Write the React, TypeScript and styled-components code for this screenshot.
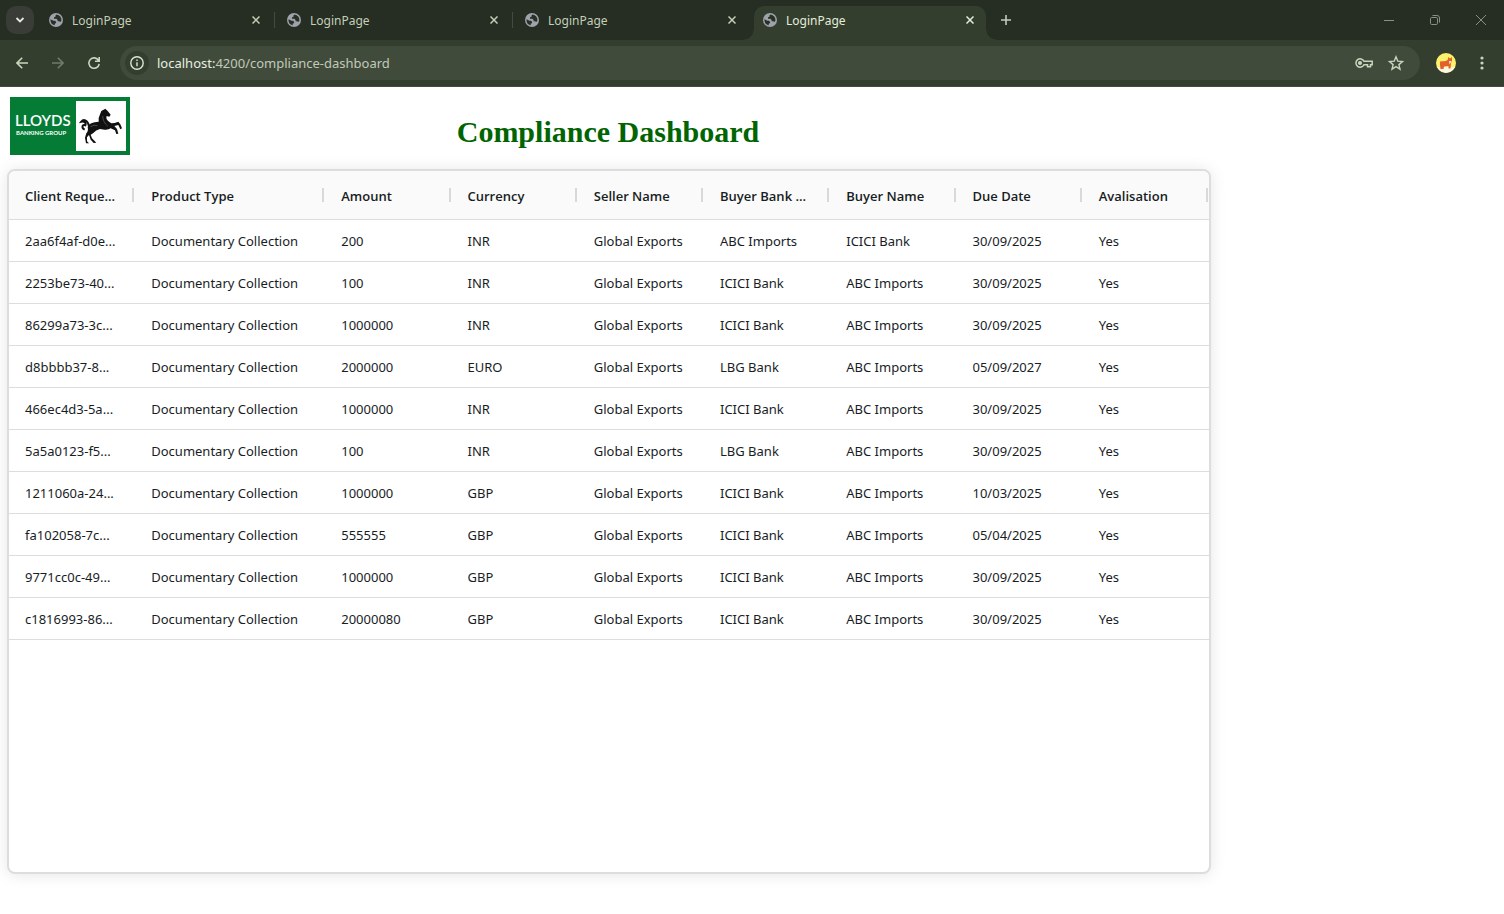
import React from "react";
import styled, { createGlobalStyle, css } from "styled-components";

const ui = css`
  font-family: "Noto Sans", "Open Sans", sans-serif;
`;

const GlobalStyle = createGlobalStyle`
  *, *::before, *::after { box-sizing: border-box; }
  html, body, #root { height: 100%; }
  body { margin: 0; background: #fff; }
  button { border: 0; padding: 0; margin: 0; background: none; font: inherit; color: inherit; }
`;

const Window = styled.div`
  min-height: 100%;
  display: flex;
  flex-direction: column;
`;

const TabStrip = styled.header`
  ${ui}
  display: flex;
  align-items: center;
  height: 40px;
  padding-left: 6px;
  background: #262d22;
  color: #c3cfb8;
  font-size: 12px;
`;

const TabSearch = styled.button`
  display: grid;
  place-items: center;
  width: 28px;
  height: 28px;
  margin-right: 2px;
  border-radius: 10px;
  background: #3a3c38;
  color: #e4eadf;
`;

const Tab = styled.div<{ $active?: boolean; $divider?: boolean }>`
  position: relative;
  display: flex;
  align-items: center;
  flex: 0 1 238px;
  height: 34px;
  margin-top: 6px;
  padding: 0 12px 6px 13px;
  ${(p) =>
    p.$divider &&
    css`
      &::after {
        content: "";
        position: absolute;
        right: -1px;
        top: 6px;
        width: 1px;
        height: 16px;
        background: #434b3e;
      }
    `}
  ${(p) =>
    p.$active &&
    css`
      flex-basis: 232px;
      margin-left: 4px;
      padding: 0 10px 6px 9px;
      border-radius: 10px 10px 0 0;
      background: #343e2e;
      color: #e3eddb;
      &::before,
      &::after {
        content: "";
        position: absolute;
        bottom: 0;
        width: 10px;
        height: 10px;
      }
      &::before {
        right: 100%;
        background: radial-gradient(circle at 0 0, transparent 9px, #343e2e 10px);
      }
      &::after {
        left: 100%;
        background: radial-gradient(circle at 100% 0, transparent 9px, #343e2e 10px);
      }
    `}
`;

const TabTitle = styled.span`
  flex: 1;
  margin-left: 9px;
  padding-top: 2px;
  line-height: 16px;
`;

const IconButton = styled.button<{ $size?: number; $dim?: boolean }>`
  display: grid;
  place-items: center;
  flex: none;
  width: ${(p) => p.$size ?? 28}px;
  height: ${(p) => p.$size ?? 28}px;
  opacity: ${(p) => (p.$dim ? 0.4 : 1)};
`;

const NewTab = styled(IconButton)`
  margin-left: 6px;
  color: #c4c8c1;
`;

const WindowControls = styled.div`
  display: flex;
  margin-left: auto;
  color: #8a8f86;
`;

const WindowButton = styled.button`
  display: grid;
  place-items: center;
  width: 46px;
  height: 40px;
`;

const Toolbar = styled.nav`
  ${ui}
  display: flex;
  align-items: center;
  height: 47px;
  padding: 0 8px;
  gap: 8px;
  background: #343e2e;
  border-bottom: 1px solid #434c3e;
  color: #c9d6be;
`;

const Omnibox = styled.div`
  display: flex;
  align-items: center;
  flex: 1;
  height: 34px;
  margin: 0 4px;
  padding: 0 8px 0 5px;
  border-radius: 17px;
  background: #404b3b;
`;

const SiteInfo = styled.button`
  display: grid;
  place-items: center;
  width: 24px;
  height: 24px;
  border-radius: 12px;
  background: #343e2e;
  color: #dde4d8;
`;

const Address = styled.div`
  flex: 1;
  margin-left: 8px;
  color: #c0c9ba;
  font-size: 13px;
  line-height: 20px;
  b {
    font-weight: 400;
    color: #e8efe2;
  }
`;

const Page = styled.main`
  flex: 1;
  padding: 10px 7px 40px;
`;

const PageHead = styled.div`
  display: grid;
  grid-template-columns: 123px 1fr 123px;
  align-items: start;
  width: 100%;
  max-width: 1202px;
  height: 72px;
`;

const Logo = styled.svg`
  display: block;
  width: 120px;
  height: 58px;
  margin-left: 3px;
`;

const Title = styled.h1`
  margin: 17px 0 0;
  text-align: center;
  color: #006400;
  font: bold 30px/36px "Liberation Serif", "Times New Roman", serif;
`;

const Grid = styled.section`
  ${ui}
  width: 100%;
  max-width: 1204px;
  min-height: 705px;
  border: 2px solid #dddddd;
  border-radius: 8px;
  overflow: hidden;
  background: #fff;
  box-shadow: 0 1px 16px rgba(0, 0, 0, 0.1);
`;

const Table = styled.table`
  width: 100%;
  border-collapse: separate;
  border-spacing: 0;
  table-layout: fixed;
  color: #181d1f;
  font-size: 13px;
  line-height: 20px;
  text-align: left;
`;

const HeaderCell = styled.th<{ $wide?: boolean }>`
  position: relative;
  width: ${(p) => (p.$wide ? "190px" : "auto")};
  height: 49px;
  padding: 2px 16px 0;
  background: #fafafa;
  border-bottom: 1px solid #dddddd;
  font-family: "Open Sans", "Noto Sans", sans-serif;
  font-weight: 600;
  white-space: nowrap;
  &::after {
    content: "";
    position: absolute;
    right: 1px;
    top: 17px;
    width: 2px;
    height: 14px;
    background: #d9d9d9;
  }
`;

const Cell = styled.td`
  height: 42px;
  padding: 0 16px;
  border-bottom: 1px solid #dddddd;
  white-space: nowrap;
`;

const Globe = () => (
  <svg width="14" height="14" viewBox="0 0 14 14" aria-hidden="true">
    <circle cx="7" cy="7" r="7" fill="#9da2ab" />
    <path
      d="M7.600 1.500 6.500 2.600v1.200L5 4.300v1.400h2.400l1.200 1.200v1.300h1.600l1 .8 1.200-1.300A5.600 5.600 0 0 0 7.600 1.500ZM1.500 6.200l2.900 1.600h1.700l1 1.100v1.200l-1.400.6v1.600A5.700 5.700 0 0 1 1.500 6.200Z"
      fill="#293026"
    />
  </svg>
);

const Cross = () => (
  <svg width="8" height="8" viewBox="0 0 8 8" stroke="currentColor" strokeWidth="1.5" aria-hidden="true">
    <path d="M.5.5l7 7M7.500.5l-7 7" />
  </svg>
);

const LloydsLogo = () => (
  <Logo viewBox="0 0 120 58" role="img" aria-label="Lloyds Banking Group">
    <rect width="120" height="58" fill="#047c36" />
    <rect x="66" y="4" width="50" height="50" fill="#fff" />
    <text x="5" y="29" fill="#fff" fontFamily="Lato, sans-serif" fontWeight="600" fontSize="15">
      LLOYDS
    </text>
    <text x="6" y="38" fill="#fff" fontFamily="Lato, sans-serif" fontWeight="700" fontSize="6">
      BANKING GROUP
    </text>
    <g transform="translate(64 0) scale(.3333)">
      <path
        d="M94 35 101 42 110 53 106 59 98 57 97 63Q99 72 112 79L122 78 133 74 139 82 144 94 139 97 133 84 121 87 129 96 133 110 127 111 123 100 110 94Q103 99 92 98L78 96Q66 99 57 109L50 113 54 124 67 137 59 138 50 128 45 114 39 121 39 133 45 139 36 139 33 122 37 109Q44 102 41 90 44 80 62 76L74 74Q72 64 77 55L82 42Z"
        fill="#111"
      />
      <path
        d="M45 88C42 70 29 65 22 74C31 72 38 79 34 85C24 81 22 93 32 98"
        fill="none"
        stroke="#111"
        strokeWidth="6"
      />
      <path d="M86 57Q87 76 101 87M50 89Q61 82 70 86" fill="none" stroke="#666" strokeWidth="2" />
    </g>
  </Logo>
);

const columns = [
  "Client Reque...",
  "Product Type",
  "Amount",
  "Currency",
  "Seller Name",
  "Buyer Bank ...",
  "Buyer Name",
  "Due Date",
  "Avalisation",
];

const D = "Documentary Collection";
const G = "Global Exports";
const rows = [
  ["2aa6f4af-d0e...", D, "200", "INR", G, "ABC Imports", "ICICI Bank", "30/09/2025", "Yes"],
  ["2253be73-40...", D, "100", "INR", G, "ICICI Bank", "ABC Imports", "30/09/2025", "Yes"],
  ["86299a73-3c...", D, "1000000", "INR", G, "ICICI Bank", "ABC Imports", "30/09/2025", "Yes"],
  ["d8bbbb37-8...", D, "2000000", "EURO", G, "LBG Bank", "ABC Imports", "05/09/2027", "Yes"],
  ["466ec4d3-5a...", D, "1000000", "INR", G, "ICICI Bank", "ABC Imports", "30/09/2025", "Yes"],
  ["5a5a0123-f5...", D, "100", "INR", G, "LBG Bank", "ABC Imports", "30/09/2025", "Yes"],
  ["1211060a-24...", D, "1000000", "GBP", G, "ICICI Bank", "ABC Imports", "10/03/2025", "Yes"],
  ["fa102058-7c...", D, "555555", "GBP", G, "ICICI Bank", "ABC Imports", "05/04/2025", "Yes"],
  ["9771cc0c-49...", D, "1000000", "GBP", G, "ICICI Bank", "ABC Imports", "30/09/2025", "Yes"],
  ["c1816993-86...", D, "20000080", "GBP", G, "ICICI Bank", "ABC Imports", "30/09/2025", "Yes"],
];

export default function App() {
  return (
    <Window>
      <GlobalStyle />
      <TabStrip>
        <TabSearch aria-label="Search tabs">
          <svg width="10" height="6" viewBox="0 0 10 6" fill="none" stroke="currentColor" strokeWidth="1.800">
            <path d="M1.500 1 5 4.500 8.500 1" />
          </svg>
        </TabSearch>
        {[0, 1, 2, 3].map((i) => (
          <Tab key={i} $active={i === 3} $divider={i < 2}>
            <Globe />
            <TabTitle>LoginPage</TabTitle>
            <IconButton $size={12} aria-label="Close tab">
              <Cross />
            </IconButton>
          </Tab>
        ))}
        <NewTab aria-label="New tab">
          <svg width="10" height="10" viewBox="0 0 10 10" stroke="currentColor" strokeWidth="1.600">
            <path d="M5 0v10M0 5h10" />
          </svg>
        </NewTab>
        <WindowControls>
          <WindowButton aria-label="Minimize">
            <svg width="10" height="10" viewBox="0 0 10 10" stroke="currentColor">
              <path d="M0 5.500h10" />
            </svg>
          </WindowButton>
          <WindowButton aria-label="Restore">
            <svg width="10" height="10" viewBox="0 0 10 10" fill="none" stroke="currentColor">
              <rect x=".5" y="2.500" width="7" height="7" rx="1.200" />
              <path d="M2.500.5H7A2.500 2.500 0 0 1 9.500 3v4.500" />
            </svg>
          </WindowButton>
          <WindowButton aria-label="Close window">
            <svg width="10" height="10" viewBox="0 0 10 10" stroke="currentColor">
              <path d="M0 0l10 10M10 0 0 10" />
            </svg>
          </WindowButton>
        </WindowControls>
      </TabStrip>

      <Toolbar>
        <IconButton aria-label="Back">
          <svg width="12" height="12" viewBox="0 0 12 12" fill="none" stroke="currentColor" strokeWidth="1.600">
            <path d="M12 6H1M6.200.8 1 6l5.200 5.200" />
          </svg>
        </IconButton>
        <IconButton $dim aria-label="Forward">
          <svg width="12" height="12" viewBox="0 0 12 12" fill="none" stroke="currentColor" strokeWidth="1.600">
            <path d="M0 6h11M5.800.8 11 6l-5.200 5.200" />
          </svg>
        </IconButton>
        <IconButton aria-label="Reload">
          <svg width="12" height="12" viewBox="0 0 12 12" fill="none" stroke="currentColor" strokeWidth="1.600">
            <path d="M10.600 3.500A5.200 5.200 0 1 0 11.200 7M11.200 0v4.200H7" />
          </svg>
        </IconButton>
        <Omnibox>
          <SiteInfo aria-label="View site information">
            <svg width="14" height="14" viewBox="0 0 14 14" fill="none" stroke="currentColor" strokeWidth="1.400">
              <circle cx="7" cy="7" r="6.200" />
              <path d="M7 6.200v4M7 3.600v1.500" />
            </svg>
          </SiteInfo>
          <Address>
            <b>localhost:</b>4200/compliance-dashboard
          </Address>
          <IconButton $size={32} aria-label="Passwords">
            <svg width="18" height="10" viewBox="0 0 18 10" fill="none" stroke="currentColor" strokeWidth="1.500">
              <path d="M9 3.300A4.200 4.200 0 1 0 9 6.700h3.500v2h3v-2h1.700V3.300Z" />
              <circle cx="5" cy="5" r="1.300" fill="currentColor" />
            </svg>
          </IconButton>
          <IconButton $size={32} aria-label="Bookmark this tab">
            <svg width="16" height="16" viewBox="0 0 16 16" fill="none" stroke="currentColor" strokeWidth="1.400">
              <path d="M8 1.800l1.800 4.400 4.700.4-3.600 3 1.100 4.600L8 11.700l-4 2.500 1.100-4.600-3.600-3 4.700-.4Z" />
            </svg>
          </IconButton>
        </Omnibox>
        <IconButton aria-label="Profile">
          <svg width="20" height="20" viewBox="0 0 20 20">
            <circle cx="10" cy="10" r="10" fill="#fdf06a" />
            <path d="M1 14h18A10 10 0 0 1 1 14Z" fill="#fbf5e4" />
            <path d="M4 8.500 10 8 12 6.500 12 4l2 1.500L16 4v3.500l-1 2.500-.5 5.500h-2V13L8 13.500 7.500 16h-3L4 12Z" fill="#e3602b" />
            <path d="M13 8h2.500l-1 2-1 1.500Z" fill="#fbe6d0" />
          </svg>
        </IconButton>
        <IconButton aria-label="Menu">
          <svg width="4" height="14" viewBox="0 0 4 14" fill="currentColor">
            <circle cx="2" cy="2" r="1.600" />
            <circle cx="2" cy="7" r="1.600" />
            <circle cx="2" cy="12" r="1.600" />
          </svg>
        </IconButton>
      </Toolbar>

      <Page>
        <PageHead>
          <LloydsLogo />
          <Title>Compliance Dashboard</Title>
        </PageHead>
        <Grid>
          <Table>
            <thead>
              <tr>
                {columns.map((c, i) => (
                  <HeaderCell key={c} scope="col" $wide={i === 1}>
                    {c}
                  </HeaderCell>
                ))}
              </tr>
            </thead>
            <tbody>
              {rows.map((r) => (
                <tr key={r[0]}>
                  {r.map((v, i) => (
                    <Cell key={i}>{v}</Cell>
                  ))}
                </tr>
              ))}
            </tbody>
          </Table>
        </Grid>
      </Page>
    </Window>
  );
}
